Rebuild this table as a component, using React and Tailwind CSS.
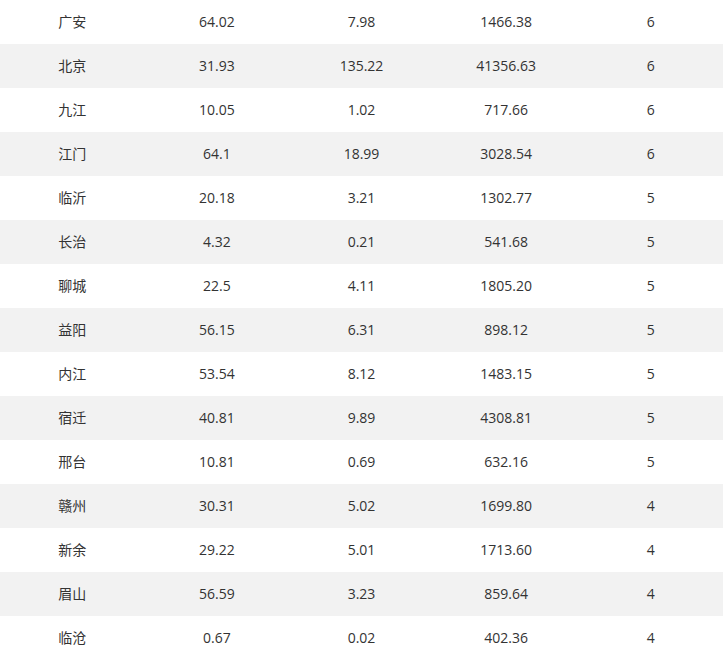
const rows = [
  ["广安", "64.02", "7.98", "1466.38", "6"],
  ["北京", "31.93", "135.22", "41356.63", "6"],
  ["九江", "10.05", "1.02", "717.66", "6"],
  ["江门", "64.1", "18.99", "3028.54", "6"],
  ["临沂", "20.18", "3.21", "1302.77", "5"],
  ["长治", "4.32", "0.21", "541.68", "5"],
  ["聊城", "22.5", "4.11", "1805.20", "5"],
  ["益阳", "56.15", "6.31", "898.12", "5"],
  ["内江", "53.54", "8.12", "1483.15", "5"],
  ["宿迁", "40.81", "9.89", "4308.81", "5"],
  ["邢台", "10.81", "0.69", "632.16", "5"],
  ["赣州", "30.31", "5.02", "1699.80", "4"],
  ["新余", "29.22", "5.01", "1713.60", "4"],
  ["眉山", "56.59", "3.23", "859.64", "4"],
  ["临沧", "0.67", "0.02", "402.36", "4"],
]

function App() {
  return (
    <div className="w-[723px] bg-white text-[14px] text-[#333] font-['Open_Sans','Noto_Sans_CJK_SC',sans-serif]">
      {rows.map((r, i) => (
        <div key={i} className={`grid grid-cols-5 h-[44px] items-center pb-[2px] ${i % 2 ? "bg-[#f2f2f2]" : "bg-white"}`}>
          {r.map((c, j) => (
            <div key={j} className="text-center">{c}</div>
          ))}
        </div>
      ))}
    </div>
  )
}

export default App
